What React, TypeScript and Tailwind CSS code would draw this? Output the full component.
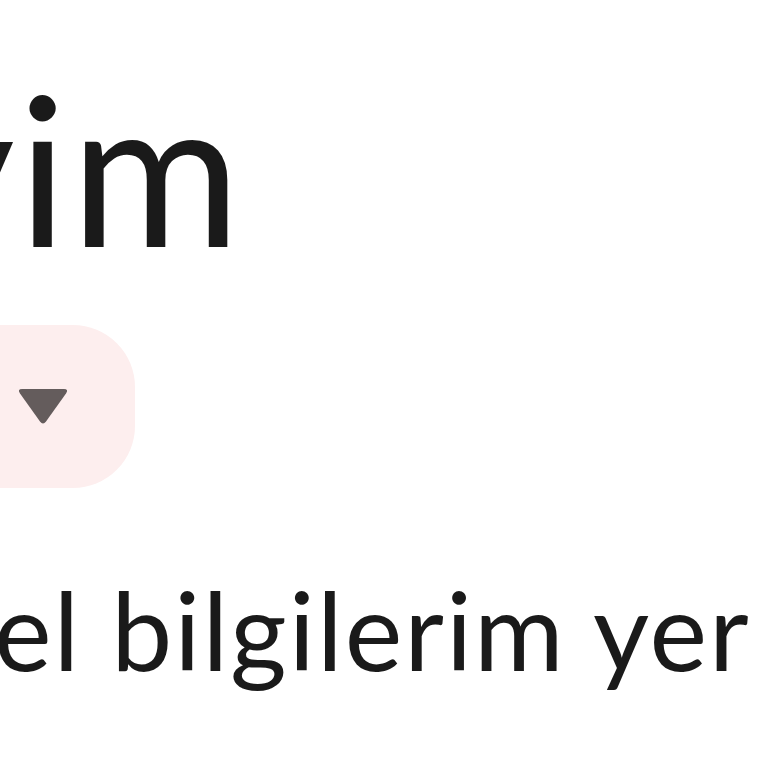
import React from "react";

export default function App() {
  return (
    <div className="w-[768px] h-[768px] overflow-hidden bg-white text-[#1a1a1a]" style={{ fontFamily: "Lato, 'Noto Sans', sans-serif" }}>
      <div className="flex flex-col">
        <div className="mt-[64px] ml-[-92px] text-[207px] leading-none whitespace-nowrap tracking-[3px]">yim</div>
        <div className="mt-[54px] ml-[-100px] w-[235px] h-[163px] rounded-[62px] bg-[#fdeeee] flex items-center justify-end pr-[66px]">
          <svg width="52" height="38" viewBox="0 0 52 38">
            <path d="M5 1 H47 Q52 1 49 5.5 L29 33.5 Q26 37.5 23 33.5 L3 5.5 Q0 1 5 1 Z" fill="#645c5c" />
          </svg>
        </div>
        <div className="mt-[86px] ml-[-6px] text-[109px] leading-none whitespace-nowrap tracking-[2px]">el bilgilerim yer</div>
      </div>
    </div>
  );
}
